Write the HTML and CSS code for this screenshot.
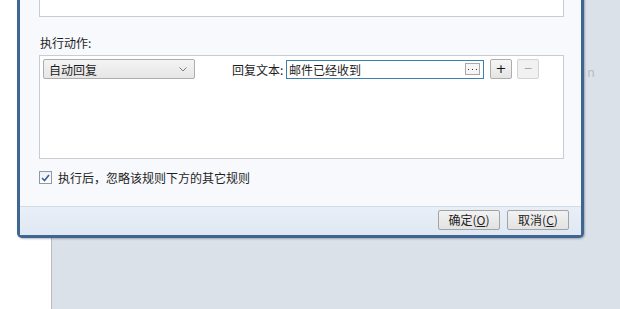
FILE: index.html
```html
<!DOCTYPE html>
<html lang="zh-CN">
<head>
    <meta charset="UTF-8">
    <title>规则</title>
    <link rel="stylesheet" href="styles.css">
</head>
<body>
    <div class="blank"></div>
    <div class="backdrop">
        <span class="ghost">n</span>
    </div>

    <div class="dialog">
        <div class="dialog-body">
            <div class="listbox"></div>

            <div class="section-label">执行动作:</div>
            <div class="action-box">
                <div class="action-row">
                    <div class="select">
                        <span>自动回复</span>
                        <svg class="chevron" width="8" height="5" viewBox="0 0 8 5">
                            <path d="M0.5 0.5 L4 4 L7.5 0.5" fill="none" stroke="#7a7a7a" stroke-width="1"/>
                        </svg>
                    </div>
                    <label class="field-label">回复文本:</label>
                    <div class="text-input">
                        <span>邮件已经收到</span>
                        <span class="more-btn">
                            <svg width="9" height="3" viewBox="0 0 9 3">
                                <rect x="0" y="1" width="1" height="1" fill="#333"/>
                                <rect x="4" y="1" width="1" height="1" fill="#333"/>
                                <rect x="8" y="1" width="1" height="1" fill="#333"/>
                            </svg>
                        </span>
                    </div>
                    <button class="small-btn">+</button>
                    <button class="small-btn disabled">−</button>
                </div>
            </div>

            <div class="check-row">
                <span class="checkbox">
                    <svg width="9" height="8" viewBox="0 0 9 8">
                        <path d="M1 4 L3.5 6.5 L8 1" fill="none" stroke="#3a5f8f" stroke-width="1.6"/>
                    </svg>
                </span>
                <span>执行后，忽略该规则下方的其它规则</span>
            </div>
        </div>

        <div class="dialog-footer">
            <button class="btn">确定(<u>O</u>)</button>
            <button class="btn">取消(<u>C</u>)</button>
        </div>
    </div>
</body>
</html>
```

FILE: styles.css
```css
body {
    margin: 0;
    width: 620px;
    height: 309px;
    display: flex;
    background: #ffffff;
    font-family: "Noto Sans CJK SC", "Microsoft YaHei", sans-serif;
    font-size: 12px;
    color: #1e1e1e;
    overflow: hidden;
    position: relative;
}

.blank {
    width: 51px;
}

.backdrop {
    flex: 1;
    background: #dbe1e8;
    border-left: 1px solid #b7bcc2;
    position: relative;
}

/* text of the window behind, peeking out */
.ghost {
    position: absolute;
    left: 535px;
    top: 62px;
    font-size: 13px;
    color: #b6bdc6;
}

.dialog {
    position: absolute;
    left: 17px;
    top: -20px;
    width: 567px;
    height: 258px;
    box-sizing: border-box;
    border: 3px solid #3f6590;
    border-top: none;
    border-radius: 0 0 5px 5px;
    background: #f7f9fc;
    display: flex;
    flex-direction: column;
    box-shadow: 1px 1px 2px rgba(40, 60, 90, 0.35);
}

.dialog-body {
    flex: 1;
    padding: 0 17px 0 19px;
}

.listbox {
    height: 37px;
    box-sizing: border-box;
    background: #ffffff;
    border: 1px solid #c9cdd2;
    border-top: none;
}

.section-label {
    margin-top: 18px;
    line-height: 16px;
    padding-left: 1px;
}

.action-box {
    margin-top: 4px;
    height: 104px;
    box-sizing: border-box;
    background: #ffffff;
    border: 1px solid #c9cdd2;
    padding: 3px;
}

.action-row {
    display: flex;
    align-items: center;
    height: 20px;
}

.action-row > * {
    flex-shrink: 0;
}

.select {
    width: 152px;
    height: 20px;
    box-sizing: border-box;
    border: 1px solid #adadad;
    border-radius: 2px;
    background: linear-gradient(#f4f4f4, #e6e6e6);
    display: flex;
    align-items: center;
    justify-content: space-between;
    padding: 0 7px 0 5px;
}

.chevron {
    margin-top: 1px;
}

.field-label {
    margin-left: 37px;
    width: 54px;
}

.text-input {
    width: 198px;
    height: 19px;
    box-sizing: border-box;
    border: 1px solid #3c7fb1;
    background: #ffffff;
    display: flex;
    align-items: center;
    justify-content: space-between;
    padding: 0 3px 0 2px;
}

.more-btn {
    width: 15px;
    height: 12px;
    box-sizing: border-box;
    border: 1px solid #a9a9a9;
    background: #f6f6f6;
    display: flex;
    align-items: center;
    justify-content: center;
}

.small-btn {
    width: 22px;
    height: 20px;
    margin-left: 6px;
    padding: 0;
    box-sizing: border-box;
    border: 1px solid #adadad;
    border-radius: 2px;
    background: linear-gradient(#f6f6f6, #e4e4e4);
    font-family: "DejaVu Sans", sans-serif;
    font-size: 13px;
    line-height: 16px;
    color: #111;
}

.small-btn.disabled {
    margin-left: 5px;
    border-color: #d3d3d3;
    background: #f1f1f1;
    color: #a8a8a8;
    font-size: 11px;
}

.check-row {
    margin-top: 12px;
    display: flex;
    align-items: center;
    height: 13px;
}

.checkbox {
    width: 13px;
    height: 13px;
    box-sizing: border-box;
    border: 1px solid #8e9aa8;
    background: linear-gradient(#eef2f6, #ffffff);
    display: flex;
    align-items: center;
    justify-content: center;
    margin-right: 6px;
}

.dialog-footer {
    height: 29px;
    box-sizing: border-box;
    border-top: 1px solid #d3dbe4;
    background: linear-gradient(#e9eff7, #dfe8f3);
    display: flex;
    justify-content: flex-end;
    padding: 3px 12px 0 0;
    gap: 7px;
}

.btn {
    width: 62px;
    height: 20px;
    padding: 0;
    box-sizing: border-box;
    border: 1px solid #a3a3a3;
    border-radius: 2px;
    background: linear-gradient(#f2f2f2, #e2e2e2);
    font-family: "Noto Sans CJK SC", sans-serif;
    font-size: 12px;
    line-height: 16px;
    color: #1e1e1e;
}
```
